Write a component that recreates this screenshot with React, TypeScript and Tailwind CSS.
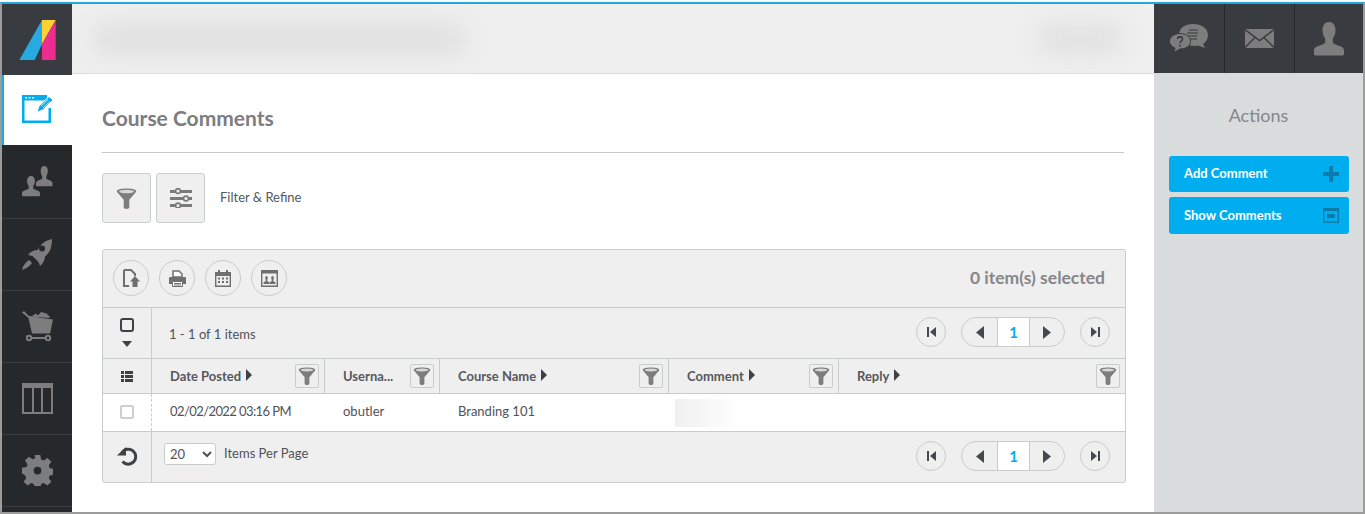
import type { ReactNode } from 'react'

const Funnel = ({ size = 20 }: { size?: number }) => (
    <svg width={size} height={size} viewBox="0 0 24 24">
        <path d="M1 3.500C1 1.500 6 .5 12 .5s11 1 11 3c0 1-.6 1.800-1.400 2.600L15.200 13.500V22c0 1.200-1.400 2-3.200 2s-3.200-.8-3.200-2v-8.500L2.400 6.100C1.600 5.300 1 4.500 1 3.500z" fill="#7d7d7d" />
        <ellipse cx="12" cy="4" rx="8.500" ry="2" fill="#d8d8d8" />
    </svg>
)

const Sliders = () => (
    <svg width="22" height="20" viewBox="0 0 22 20">
        <g fill="#7a7a7a">
            <rect x="0" y="2" width="22" height="3" />
            <rect x="0" y="9" width="22" height="3" />
            <rect x="0" y="16" width="22" height="3" />
        </g>
        <g fill="#efefef" stroke="#7a7a7a" strokeWidth="1.600">
            <circle cx="8" cy="3" r="2.400" />
            <circle cx="16" cy="10.500" r="2.400" />
            <circle cx="8" cy="17.500" r="2.400" />
        </g>
    </svg>
)

const Logo = () => (
    <svg width="37" height="40" viewBox="57 57 109 120">
        <path d="M125 57v73l-22 47H57z" fill="#27aae1" />
        <path d="M125 57h41l-41 73z" fill="#fdd134" />
        <path d="M125 130l41-73v120h-41z" fill="#ec2d8f" />
    </svg>
)

const EditIcon = () => (
    <svg width="31" height="29" viewBox="0 0 31 29">
        <path d="M0 0h25v5.500H2.500v20h24V13H29v15H0z" fill="#00adef" />
        <path d="M3 2h2v1.500H3zM6.500 2h2v1.500h-2zM10 2h2v1.500h-2z" fill="#fff" />
        <path d="M15 17l2-6L27 1.500 31 5 21 15z" fill="#00adef" stroke="#fff" strokeWidth="1" />
        <path d="M19 11l7-6.500M21 13l7-6.500" stroke="#fff" strokeWidth="0.800" />
    </svg>
)

const PERSON_D = 'M15 0c4 0 6.500 3 6.500 7.500 0 3-1 5.500-2.700 7.500v3.500c0 1 1.200 1.500 3.200 2.200 4 1.300 8 2 8 5.300v3c0 1-.7 1.500-1.500 1.500H1.500C.7 30.500 0 30 0 29v-3c0-3.300 4-4 8-5.300 2-.7 3.200-1.200 3.200-2.200V15C9.500 13 8.500 10.500 8.500 7.500 8.500 3 11 0 15 0z'

const Person = ({ x, y, sx = 1, sy = 1, fill = '#7d7d7d' }: { x: number; y: number; sx?: number; sy?: number; fill?: string }) => (
    <path transform={`translate(${x} ${y}) scale(${sx} ${sy})`} d={PERSON_D} fill={fill} />
)

const UsersIcon = () => (
    <svg width="31" height="31" viewBox="0 0 31 31">
        <Person x={14} y={0} sx={0.55} sy={0.66} />
        <Person x={0} y={10} sx={0.6} sy={0.66} />
    </svg>
)

const RocketIcon = () => (
    <svg width="30" height="31" viewBox="0 0 30 31" fill="#7d7d7d">
        <path fillRule="evenodd" d="M30 0c0 8-2 13.500-7 17.500 0 3-1.500 6.500-5 9.500l-1.500-4-6-6-4.500-1c2.500-3.500 6-5 9.500-5C19 5 23 1.500 30 0zM20 6.500a3 3 0 100 6 3 3 0 000-6z" />
        <path d="M7 21c1 1 2 2 3 3-2 3-5 5-10 7 1-5 4-8 7-10z" />
    </svg>
)

const CartIcon = () => (
    <svg width="31" height="31" viewBox="0 0 31 31" fill="#7d7d7d">
        <path d="M0 1.500L2 0l5 5 24 3.500-3 14H10L6.500 7z" />
        <path d="M10 5l4-2.500 2 2 3-3.500 5.500 1.500 3 3v1.500L8 5.500z" />
        <path d="M7 26h19v2H7z" />
        <circle cx="7" cy="27" r="2.200" fill="#26292c" stroke="#7d7d7d" strokeWidth="2" />
        <circle cx="26" cy="27" r="2.200" fill="#26292c" stroke="#7d7d7d" strokeWidth="2" />
    </svg>
)

const ColumnsIcon = () => (
    <svg width="31" height="31" viewBox="0 0 31 31">
        <path d="M1 1h29v29H1z" fill="none" stroke="#7d7d7d" strokeWidth="2" />
        <path d="M0 0h31v5H0zM10 5h2v25h-2zM19 5h2v25h-2z" fill="#7d7d7d" />
    </svg>
)

const GearIcon = () => (
    <svg width="31" height="31" viewBox="0 0 24 24" fill="#7d7d7d">
        <path fillRule="evenodd" d="M9.800 0h4.400l.6 3.500 2 .8L19.700 2.300l3 3-2 2.900.8 2 3.500.600v4.400l-3.500.6-.8 2 2 2.900-3 3-2.900-2-2 .8-.6 3.500H9.800l-.6-3.500-2-.8-2.900 2-3-3 2-2.900-.8-2L0 14.200V9.800l3.500-.6.800-2-2-2.900 3-3 2.900 2 2-.8zM12 9a3 3 0 100 6 3 3 0 000-6z" />
    </svg>
)

const ChatIcon = () => (
    <svg width="40" height="29" viewBox="0 0 40 29">
        <path d="M24 0c8.500 0 15 4.500 15 11 0 4-2 7-5 9l2 4-7-2.500c-2 .5-4 .5-6 .3-8-.8-13-5-13-11C10 4.500 15.500 0 24 0z" fill="#7d7d7d" />
        <path d="M18 9h11M20 6h9M19 12h9M21 15h7" stroke="#383b40" strokeWidth="1" />
        <path d="M11 9.500c6 0 10.500 3.500 10.500 8s-4.500 7.500-10.500 7.500l-6 3.500 1-4.500C2.500 22.500.5 20.500.5 17.500c0-4.500 4.500-8 10.500-8z" fill="#7d7d7d" stroke="#383b40" strokeWidth="1" />
        <path d="M8.500 15c.5-3 5-3 5 0 0 2-2.500 2-2.500 4M11 20.500v2" fill="none" stroke="#2f3236" strokeWidth="1.300" />
    </svg>
)

const MailIcon = () => (
    <svg width="29" height="19" viewBox="0 0 29 19">
        <path d="M0 0h29v19H0z" fill="#7d7d7d" />
        <path d="M0 .5l14.500 11L29 .5M0 18.500l10-10M29 18.500l-10-10" fill="none" stroke="#383b40" strokeWidth="1.400" />
    </svg>
)

const CircleBtn = ({ children }: { children: ReactNode }) => (
    <button className="w-9 h-9 rounded-full border border-[#c9cccc] bg-[#efefef] flex items-center justify-center">
        {children}
    </button>
)

const ExportIcon = () => (
    <svg width="17" height="18" viewBox="0 0 17 18">
        <path d="M1 1h7l4 4v2M1 1v16h5" fill="none" stroke="#6f6f6f" strokeWidth="2" />
        <path d="M12 7l5 5.500h-2.500V18h-5v-5.500H7z" fill="#6f6f6f" />
    </svg>
)

const PrintIcon = () => (
    <svg width="17" height="17" viewBox="0 0 17 17">
        <path d="M4 1h6l3 3v3H4z" fill="#fff" stroke="#6f6f6f" strokeWidth="1.500" />
        <path d="M1 7h15a1 1 0 011 1v6h-3v-3H3v3H0V8a1 1 0 011-1z" fill="#6f6f6f" />
        <path d="M3.500 11.500h10v5h-10z" fill="#fff" stroke="#6f6f6f" />
        <path d="M5 13.500h7M5 15h7" stroke="#6f6f6f" />
    </svg>
)

const CalendarIcon = () => (
    <svg width="16" height="17" viewBox="0 0 16 17">
        <path d="M.7 2.700h14.600v13.600H.7z" fill="#efefef" stroke="#6f6f6f" strokeWidth="1.400" />
        <path d="M0 2h16v4H0zM3 0h2v3H3zM11 0h2v3h-2z" fill="#6f6f6f" />
        <path d="M3 7.500h2v2H3zM7 7.500h2v2H7zM11 7.500h2v2h-2zM3 11h2v2H3zM7 11h2v2H7zM11 11h2v2h-2z" fill="#6f6f6f" />
    </svg>
)

const ContactsIcon = () => (
    <svg width="17" height="17" viewBox="0 0 17 17">
        <path d="M.7.700h15.600v15.600H.7z" fill="#efefef" stroke="#6f6f6f" strokeWidth="1.400" />
        <path d="M0 0h17v3.500H0z" fill="#6f6f6f" />
        <Person x={2.500} y={6} sx={0.2} sy={0.26} fill="#6f6f6f" />
        <Person x={8.500} y={6} sx={0.2} sy={0.26} fill="#6f6f6f" />
    </svg>
)

const Triangle = ({ dir }: { dir: 'left' | 'right' }) => (
    <svg width="8" height="13" viewBox="0 0 8 13" fill="#45484d">
        <path d={dir === 'left' ? 'M8 0v13L0 6.500z' : 'M0 0v13l8-6.500z'} />
    </svg>
)

const EdgeIcon = ({ dir }: { dir: 'first' | 'last' }) => (
    <svg width="9" height="10" viewBox="0 0 9 10" fill="#45484d">
        <path d={dir === 'first' ? 'M0 0h2v10H0zM9 0v10L3 5z' : 'M9 0H7v10h2zM0 0v10l6-5z'} />
    </svg>
)

const Pager = () => (
    <div className="flex items-center">
        <button className="w-[30px] h-[30px] rounded-full border border-[#c9cccc] flex items-center justify-center">
            <EdgeIcon dir="first" />
        </button>
        <div className="ml-[15px] w-[104px] h-[30px] rounded-full border border-[#c9cccc] flex overflow-hidden">
            <button className="w-[35px] flex items-center justify-center">
                <Triangle dir="left" />
            </button>
            <span className="w-[33px] bg-white border-x border-[#c9cccc] flex items-center justify-center text-[15px] font-bold text-[#00adef]">
                1
            </span>
            <button className="flex-1 flex items-center justify-center">
                <Triangle dir="right" />
            </button>
        </div>
        <button className="ml-[15px] w-[30px] h-[30px] rounded-full border border-[#c9cccc] flex items-center justify-center">
            <EdgeIcon dir="last" />
        </button>
    </div>
)

const columns = [
    { label: 'Date Posted', caret: true },
    { label: 'Userna...', caret: false },
    { label: 'Course Name', caret: true },
    { label: 'Comment', caret: true },
    { label: 'Reply', caret: true },
]

const gridCols = 'grid grid-cols-[49px_173px_115px_229px_170px_1fr]'

const sideItems = [
    { key: 'users', icon: <UsersIcon />, h: 'h-[74px]' },
    { key: 'rocket', icon: <RocketIcon />, h: 'h-[72px]' },
    { key: 'cart', icon: <CartIcon />, h: 'h-[72px]' },
    { key: 'columns', icon: <ColumnsIcon />, h: 'h-[72px]' },
    { key: 'gear', icon: <GearIcon />, h: 'h-[72px]' },
]

export default function App() {
    return (
        <div className="w-[1365px] h-[514px] overflow-hidden bg-white pt-[2px] font-[Lato,sans-serif]">
            <div className="h-full flex border-t-2 border-x-2 border-b-2 border-t-[#1fa8df] border-x-[#9c9c9c] border-b-[#9c9c9c]">
                {/* Left nav */}
                <div className="w-[70px] shrink-0 flex flex-col bg-[#26292c]">
                    <div className="h-[71px] bg-[#383b40] flex items-center justify-center">
                        <Logo />
                    </div>
                    <div className="h-[70px] bg-white border-l-2 border-[#1fa8df] flex items-center justify-center pr-[2px] pb-[2px]">
                        <EditIcon />
                    </div>
                    {sideItems.map((item) => (
                        <div key={item.key} className={`${item.h} border-b border-[#3a3d40] flex items-center justify-center`}>
                            {item.icon}
                        </div>
                    ))}
                </div>

                {/* Middle column */}
                <div className="flex-1 min-w-0 flex flex-col">
                    <div className="h-[70px] shrink-0 bg-[#efefef] border-b border-[#dddddd] flex items-center justify-between pl-[22px] pr-[34px] overflow-hidden">
                        <div className="w-[370px] h-[32px] bg-[#e0e0e0] blur-md" />
                        <div className="w-[80px] h-[28px] bg-[#e0e0e0] blur-md" />
                    </div>

                    <div className="flex-1 pl-[30px] pr-[28px]">
                        <h1 className="mt-[29px] h-[30px] leading-[30px] text-[21px] font-bold text-[#7b7d80]">Course Comments</h1>
                        <div className="mt-[19px] mr-[2px] border-t border-[#c9c9c9]" />

                        <div className="mt-[20px] flex items-center">
                            <button className="w-[49px] h-[50px] bg-[#efefef] border border-[#c9cccc] rounded-[3px] flex items-center justify-center">
                                <Funnel size={21} />
                            </button>
                            <button className="ml-[5px] w-[49px] h-[50px] bg-[#efefef] border border-[#c9cccc] rounded-[3px] flex items-center justify-center">
                                <Sliders />
                            </button>
                            <span className="ml-[15px] text-[13px] text-[#55585c]">Filter &amp; Refine</span>
                        </div>

                        {/* Grid */}
                        <div className="mt-[26px] h-[234px] bg-[#efefef] border border-[#c9cccc] rounded-[3px] text-[13px] text-[#4f5257]">
                            <div className="h-[58px] border-b border-[#c9cccc] flex items-center pl-[10px] pr-[20px] pb-[1px] gap-[10px]">
                                <CircleBtn><ExportIcon /></CircleBtn>
                                <CircleBtn><PrintIcon /></CircleBtn>
                                <CircleBtn><CalendarIcon /></CircleBtn>
                                <CircleBtn><ContactsIcon /></CircleBtn>
                                <span className="ml-auto text-[17.5px] font-bold text-[#85878a]">0 item(s) selected</span>
                            </div>

                            <div className="h-[51px] border-b border-[#c9cccc] flex">
                                <div className="w-[49px] shrink-0 border-r border-[#c9cccc] flex flex-col items-center pt-[10px]">
                                    <div className="w-[14px] h-[14px] border-2 border-[#3e4146] rounded-[3px]" />
                                    <div className="mt-[9px] w-0 h-0 border-x-[5px] border-x-transparent border-t-[6px] border-t-[#3e4146]" />
                                </div>
                                <div className="flex-1 flex items-center justify-between pl-[17px] pr-[15px] pb-[2px]">
                                    <span className="mt-[6px]">1 - 1 of 1 items</span>
                                    <Pager />
                                </div>
                            </div>

                            <div className={`${gridCols} h-[35px] border-b border-[#c9cccc]`}>
                                <div className="border-r border-[#c9cccc] flex items-center justify-center">
                                    <svg width="12" height="11" viewBox="0 0 12 11" fill="#3e4146">
                                        <path d="M0 0h3v3H0zM4 0h8v3H4zM0 4h3v3H0zM4 4h8v3H4zM0 8h3v3H0zM4 8h8v3H4z" />
                                    </svg>
                                </div>
                                {columns.map((col, i) => (
                                    <div key={col.label} className={`${i < columns.length - 1 ? 'border-r border-[#c9cccc]' : ''} flex items-center pl-[18px] pr-[5px]`}>
                                        <span className="mt-[2px] font-bold text-[#55585c]">{col.label}</span>
                                        {col.caret && (
                                            <span className="ml-[5px] mb-[3px] w-0 h-0 border-y-[6px] border-y-transparent border-l-[6px] border-l-[#3e4146]" />
                                        )}
                                        <button className="ml-auto w-[24px] h-[24px] border border-[#c9cccc] rounded-[2px] flex items-center justify-center">
                                            <Funnel size={18} />
                                        </button>
                                    </div>
                                ))}
                            </div>

                            <div className={`${gridCols} h-[38px] bg-white border-b border-[#c9cccc] items-stretch`}>
                                <div className="border-r border-dashed border-[#c9cccc] flex items-center justify-center pb-[2px]">
                                    <div className="w-[14px] h-[14px] border-2 border-[#ccd0d2] rounded-[2px]" />
                                </div>
                                <div className="pl-[18px] pb-[2px] flex items-center tracking-[-0.58px]">02/02/2022 03:16 PM</div>
                                <div className="pl-[18px] pb-[2px] flex items-center">obutler</div>
                                <div className="pl-[18px] pb-[2px] flex items-center">Branding 101</div>
                                <div className="pl-[6px] flex items-center">
                                    <div className="w-[66px] h-[28px] bg-linear-to-r from-[#f0f0f0] to-white" />
                                </div>
                                <div />
                            </div>

                            <div className="h-[50px] flex">
                                <div className="w-[49px] shrink-0 border-r border-[#c9cccc] flex items-center justify-center">
                                    <svg width="21" height="20" viewBox="0 0 21 20" fill="none">
                                        <path d="M5 5.500a7.500 7.500 0 11.500 9" stroke="#3e4146" strokeWidth="3" />
                                        <path d="M0 8.500h9V0z" fill="#3e4146" />
                                    </svg>
                                </div>
                                <div className="flex-1 flex items-center justify-between pl-[12px] pr-[15px] pb-[2px]">
                                    <div className="flex items-center -mt-[4px]">
                                        <select defaultValue="20" className="w-[52px] h-[22px] bg-white border border-[#c9cccc] rounded-[3px] pl-[1px] text-[13px] text-[#4f5257]">
                                            <option value="20">20</option>
                                            <option value="50">50</option>
                                        </select>
                                        <span className="ml-[8px] -mt-[1px]">Items Per Page</span>
                                    </div>
                                    <Pager />
                                </div>
                            </div>
                        </div>
                    </div>
                </div>

                {/* Right column */}
                <div className="w-[209px] shrink-0 flex flex-col bg-[#d9dcdd]">
                    <div className="h-[69px] shrink-0 bg-[#383b40] flex">
                        <div className="w-[71px] border-r border-[#26292c] flex items-center justify-center"><ChatIcon /></div>
                        <div className="w-[70px] border-r border-[#26292c] flex items-center justify-center"><MailIcon /></div>
                        <div className="flex-1 flex items-center justify-center">
                            <svg width="30" height="34" viewBox="0 0 30 31" preserveAspectRatio="none"><Person x={0} y={0} /></svg>
                        </div>
                    </div>
                    <div className="mt-[30px] text-center text-[18px] leading-[24px] text-[#85878a]">Actions</div>
                    <div className="mt-[29px] pl-[15px] pr-[14px] flex flex-col gap-[5px]">
                        <button className="h-[36px] bg-[#00adef] rounded-[3px] flex items-center justify-between pl-[15px] pr-[10px] text-[13px] font-bold text-white">
                            Add Comment
                            <svg width="16" height="16" viewBox="0 0 16 16" fill="#0a7bab"><path d="M6 0h4v6h6v4h-6v6H6v-6H0V6h6z" /></svg>
                        </button>
                        <button className="h-[37px] bg-[#00adef] rounded-[3px] flex items-center justify-between pl-[15px] pr-[10px] text-[13px] font-bold text-white">
                            Show Comments
                            <svg width="16" height="15" viewBox="0 0 16 15" fill="none">
                                <path d="M.7.700h14.600v13.600H.7z" stroke="#0a7bab" strokeWidth="1.400" />
                                <path d="M0 0h16v3H0zM4 6h8v4H4z" fill="#0a7bab" />
                            </svg>
                        </button>
                    </div>
                </div>
            </div>
        </div>
    )
}
